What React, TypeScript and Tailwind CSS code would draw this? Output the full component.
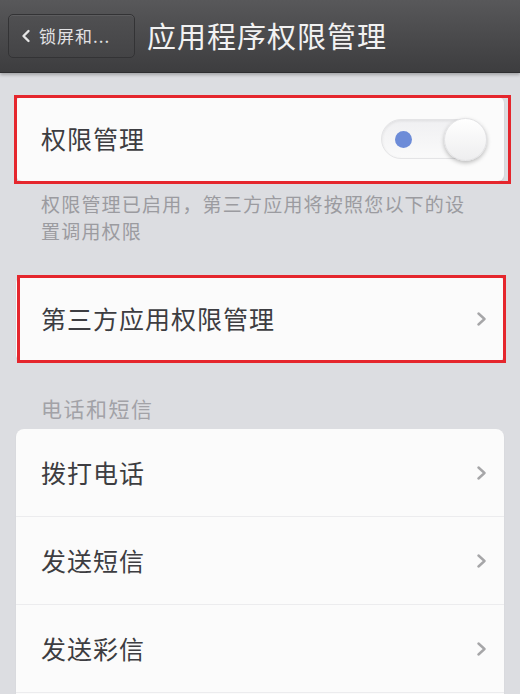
import React from "react";

const font = { fontFamily: '"Noto Sans CJK SC", "Noto Sans", sans-serif' };

function Chevron() {
  return (
    <svg width="11" height="14" viewBox="0 0 11 14" className="shrink-0">
      <polyline points="2.5,1.5 8.5,7 2.5,12.5" fill="none" stroke="#a6a6a8" strokeWidth="2.4" strokeLinecap="round" strokeLinejoin="round" />
    </svg>
  );
}

function Row({ label }: { label: string }) {
  return (
    <div className="flex h-[88px] items-center justify-between border-b border-[#ececee] pl-[25px] pr-[17px]">
      <span className="text-[25px] tracking-[1px] text-[#3d3d41]">{label}</span>
      <Chevron />
    </div>
  );
}

export default function App() {
  return (
    <div className="h-[694px] w-[520px] overflow-hidden bg-[#dcdde1]" style={font}>
      <div className="flex h-[73px] items-center bg-gradient-to-b from-[#58585a] to-[#3d3d3f] pl-[8px] shadow-[0_2px_3px_rgba(0,0,0,0.25)] border-b border-[#2e2e30]">
        <div className="flex h-[44px] w-[127px] items-center rounded-[5px] border border-[#333335] bg-gradient-to-b from-[#505052] to-[#444446] pl-[12px] shadow-[inset_0_1px_0_rgba(255,255,255,0.08)]">
          <svg width="10" height="14" viewBox="0 0 10 14" className="mr-[8px]">
            <polyline points="7.5,2 2.5,7 7.5,12" fill="none" stroke="#e6e6e6" strokeWidth="2.4" strokeLinecap="round" strokeLinejoin="round" />
          </svg>
          <span className="text-[17px] tracking-[1px] text-[#e2e2e4]">锁屏和...</span>
        </div>
        <span className="ml-[12px] text-[29px] tracking-[1px] text-[#f2f2f2]">应用程序权限管理</span>
      </div>

      <div className="px-[16px] pt-[24px]">
        <div className="relative">
          <div className="flex h-[84px] items-center justify-between rounded-[6px] bg-[#fbfbfb] pl-[25px] pr-[17px] shadow-[0_1px_2px_rgba(0,0,0,0.08)]">
            <span className="text-[25px] tracking-[1px] text-[#3d3d41]">权限管理</span>
            <div className="relative flex h-[40px] w-[106px] items-center rounded-full border border-[#e4e4e6] bg-gradient-to-b from-[#f0f0f2] to-[#fafafa] shadow-[inset_0_1px_3px_rgba(0,0,0,0.08)]">
              <div className="ml-[13px] h-[17px] w-[17px] rounded-full bg-[#6d8cd8]" />
              <div className="absolute right-[-1px] top-[-2px] h-[43px] w-[43px] rounded-full border border-[#e2e2e4] bg-gradient-to-b from-[#ffffff] to-[#eeeeef] shadow-[0_2px_4px_rgba(0,0,0,0.25)]" />
            </div>
          </div>
          <div className="pointer-events-none absolute left-[-2px] right-[-7px] top-[-2px] bottom-[-3px] border-[3px] border-[#e5262d]" />
        </div>

        <p className="mt-[9px] ml-[25px] w-[434px] text-[19px] leading-[27px] tracking-[1.2px] text-[#9b9ba0]">
          权限管理已启用，第三方应用将按照您以下的设置调用权限
        </p>

        <div className="relative mt-[33px]">
          <div className="flex h-[84px] items-center justify-between rounded-[6px] bg-[#fbfbfb] pl-[25px] pr-[17px] shadow-[0_1px_2px_rgba(0,0,0,0.08)]">
            <span className="text-[25px] tracking-[1px] text-[#3d3d41]">第三方应用权限管理</span>
            <Chevron />
          </div>
          <div className="pointer-events-none absolute left-[1px] right-[-2px] top-[-2px] bottom-[-2px] border-[3px] border-[#e5262d]" />
        </div>

        <div className="mt-[35px] pl-[25px] text-[21px] leading-[24px] tracking-[1.5px] text-[#a2a2a7]">电话和短信</div>

        <div className="mt-[9px] rounded-[8px] bg-[#fbfbfb] shadow-[0_1px_2px_rgba(0,0,0,0.06)]">
          <Row label="拨打电话" />
          <Row label="发送短信" />
          <Row label="发送彩信" />
          <div className="h-[40px]" />
        </div>
      </div>
    </div>
  );
}
